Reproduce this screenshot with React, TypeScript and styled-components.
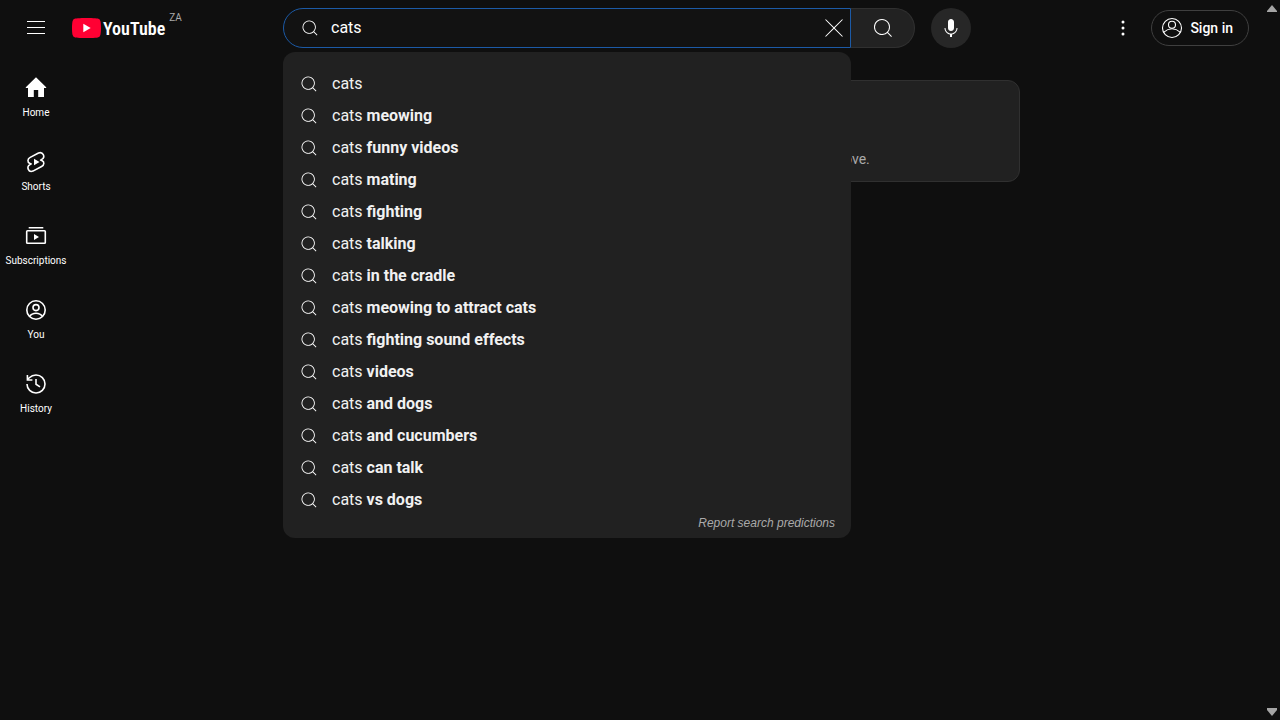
import React, { useState } from 'react';
import styled, { createGlobalStyle } from 'styled-components';

const GlobalStyle = createGlobalStyle`
  *, *::before, *::after { box-sizing: border-box; }
  body {
    margin: 0;
    background: #0f0f0f;
    color: #f1f1f1;
    font-family: Roboto, Arial, sans-serif;
    font-size: 14px;
  }
  button { font-family: inherit; color: inherit; border: 0; background: none; padding: 0; cursor: pointer; }
  a { color: inherit; text-decoration: none; }
  svg { display: block; flex: none; }
`;

const Shell = styled.div`
  display: flex;
  min-height: 100vh;
`;

const Page = styled.div`
  flex: 1;
  min-width: 0;
`;

const ScrollTrack = styled.div`
  position: sticky;
  top: 0;
  width: 15px;
  height: 100vh;
  padding: 5px 1px 4px 0;
  display: flex;
  flex-direction: column;
  align-items: center;
  justify-content: space-between;
`;

const Masthead = styled.header`
  display: flex;
  align-items: center;
  justify-content: space-between;
  height: 56px;
  padding: 0 16px;
`;

const Start = styled.div`
  display: flex;
  align-items: center;
  width: 174px;
`;

const Center = styled.div`
  display: flex;
  align-items: center;
  flex: 0 1 728px;
  min-width: 0;
`;

const End = styled.div`
  display: flex;
  align-items: center;
  justify-content: flex-end;
  gap: 8px;
  width: 225px;
`;

const IconButton = styled.button<{ $filled?: boolean }>`
  display: flex;
  align-items: center;
  justify-content: center;
  flex: none;
  width: 40px;
  height: 40px;
  border-radius: 50%;
  background: ${(p) => (p.$filled ? '#272727' : 'transparent')};
`;

const Logo = styled.a`
  display: flex;
  align-items: center;
  height: 56px;
  padding-left: 16px;
  gap: 2px;
`;

const Wordmark = styled.span`
  padding-top: 2px;
  font-family: 'Roboto Condensed', 'Liberation Sans Narrow', 'Liberation Sans', sans-serif;
  font-size: 18px;
  line-height: 22px;
  font-weight: 600;
  color: #fff;
`;

const Country = styled.span`
  align-self: flex-start;
  padding: 12px 0 0 2px;
  font-size: 10px;
  line-height: 12px;
  color: #aaa;
`;

const SearchForm = styled.form`
  display: flex;
  flex: 1;
  min-width: 0;
  margin: 0 16px 0 40px;
`;

const SearchBox = styled.div`
  position: relative;
  display: flex;
  align-items: center;
  flex: 1;
  min-width: 0;
  height: 40px;
  padding: 0 4px 0 16px;
  border: 1px solid #1c5aa6;
  border-radius: 40px 0 0 40px;
  background: #121212;
`;

const SearchInput = styled.input`
  flex: 1;
  min-width: 0;
  margin-left: 11px;
  padding: 0;
  border: 0;
  outline: 0;
  background: transparent;
  color: #fff;
  font-family: inherit;
  font-size: 16px;
  line-height: 24px;
`;

const SearchButton = styled.button`
  display: flex;
  align-items: center;
  justify-content: center;
  width: 64px;
  height: 40px;
  border: 1px solid #303030;
  border-left: 0;
  border-radius: 0 40px 40px 0;
  background: #222;
`;

const Suggestions = styled.div`
  position: absolute;
  z-index: 2;
  top: 43px;
  left: -1px;
  right: -1px;
  padding: 16px 0 8px;
  border-radius: 12px;
  background: #212121;
`;

const SuggestionList = styled.ul`
  list-style: none;
  margin: 0;
  padding: 0;
`;

const Suggestion = styled.button`
  display: flex;
  align-items: center;
  gap: 13px;
  width: 100%;
  height: 32px;
  padding: 0 16px;
  font-size: 16px;
  line-height: 24px;
  text-align: left;
  white-space: pre;
  b { font-weight: 700; }
`;

const Report = styled.a`
  display: block;
  padding: 0 16px;
  text-align: right;
  font: italic 12px/14px 'Liberation Sans', Arial, sans-serif;
  color: #aaa;
`;

const SignIn = styled.a`
  display: flex;
  align-items: center;
  gap: 6px;
  height: 36px;
  padding: 0 15px 0 8px;
  border: 1px solid #3f3f3f;
  border-radius: 18px;
  font-size: 14px;
  font-weight: 500;
  white-space: nowrap;
  color: #fff;
`;

const Body = styled.div`
  display: flex;
`;

const Guide = styled.nav`
  flex: none;
  width: 72px;
  padding-top: 4px;
`;

const GuideItem = styled.a`
  display: flex;
  flex-direction: column;
  align-items: center;
  gap: 6px;
  padding: 16px 0 14px;
  font-size: 10px;
  line-height: 14px;
  color: #fff;
`;

const Main = styled.main`
  flex: 1;
  min-width: 0;
  padding-top: 24px;
`;

const Nudge = styled.section`
  max-width: 703px;
  margin: 0 auto;
  padding: 24px 12px 12px;
  border: 1px solid #303030;
  border-radius: 12px;
  background: #212121;
  text-align: center;
`;

const NudgeTitle = styled.h1`
  margin: 0 0 12px;
  font-size: 24px;
  line-height: 32px;
`;

const NudgeText = styled.p`
  margin: 0;
  font-size: 14px;
  line-height: 20px;
  color: #aaa;
`;

const Icon = ({ size = 24, children }: { size?: number; children: React.ReactNode }) => (
  <svg width={size} height={size} viewBox="0 0 24 24" fill="#fff" aria-hidden="true">
    {children}
  </svg>
);

const SearchIcon = ({ size }: { size?: number }) => (
  <Icon size={size}>
    <path
      fillRule="evenodd"
      d="M16.296 16.996a8 8 0 11.707-.708l3.909 3.91-.707.707-3.909-3.909zM18 11a7 7 0 00-14 0 7 7 0 1014 0z"
    />
  </Icon>
);

const line = { fill: 'none', stroke: '#fff', strokeWidth: 1.6 } as const;

const guide = [
  {
    label: 'Home',
    icon: <path d="M12 1.3 1.8 11.2V12H4v9h5.8v-7h4.4v7H20v-9h2.2v-.8z" />,
  },
  {
    label: 'Shorts',
    icon: (
      <>
        <path
          {...line}
          strokeLinejoin="round"
          d="m14.500 3-8.300 4.400C3.300 9 3.300 12 5.600 13.200l1.600.7-1.200.7c-4 2.200-1.500 8.200 2.900 6.500l8.700-4.600c2.900-1.600 2.800-4.700.6-5.700l-1.600-.7 1.200-.7c4-2.300 1.100-8.300-3.300-6.400z"
        />
        <path d="M10 8.800v6.400l5.500-3.200z" />
      </>
    ),
  },
  {
    label: 'Subscriptions',
    icon: (
      <>
        <path d="M4.700 3h14.600v1.400H4.700zM10 10v6l5-3z" />
        <rect x="2.700" y="6.700" width="18.600" height="12.600" rx="0.8" {...line} />
      </>
    ),
  },
  {
    label: 'You',
    icon: (
      <g {...line}>
        <circle cx="12" cy="12" r="9.200" />
        <circle cx="12" cy="9.600" r="3" />
        <path d="M5.400 18.600C7 16.200 9.300 15.200 12 15.200s5 1 6.600 3.400" />
      </g>
    ),
  },
  {
    label: 'History',
    icon: (
      <g {...line}>
        <path d="M3 12a9 9 0 1 0 9-9 9.750 9.750 0 0 0-6.740 2.740L3.500 7.500" />
        <path d="M3.400 3v5h5M12 7v5.200l4 2.600" />
      </g>
    ),
  },
];

const suggestions = [
  '',
  'meowing',
  'funny videos',
  'mating',
  'fighting',
  'talking',
  'in the cradle',
  'meowing to attract cats',
  'fighting sound effects',
  'videos',
  'and dogs',
  'and cucumbers',
  'can talk',
  'vs dogs',
];

export default function App() {
  const [query, setQuery] = useState('cats');

  return (
    <Shell>
      <GlobalStyle />
      <Page>
        <Masthead>
          <Start>
            <IconButton aria-label="Guide">
              <Icon>
                <path d="M21 6H3V5h18v1zm0 5H3v1h18v-1zm0 6H3v1h18v-1z" />
              </Icon>
            </IconButton>
            <Logo href="#home">
              <svg width="29" height="20" viewBox="0 0 29 20" aria-hidden="true">
                <path
                  fill="#f03"
                  d="M28.400 3.100A3.600 3.600 0 0 0 25.800.6C23.500 0 14.500 0 14.500 0S5.500 0 3.200.6A3.600 3.600 0 0 0 .6 3.100C0 5.400 0 10 0 10s0 4.600.6 6.900a3.600 3.600 0 0 0 2.600 2.500c2.300.6 11.300.6 11.300.6s9 0 11.300-.6a3.600 3.600 0 0 0 2.600-2.500C29 14.600 29 10 29 10s0-4.600-.6-6.900z"
                />
                <path fill="#fff" d="M11.300 14.300V5.700L18.700 10z" />
              </svg>
              <Wordmark>YouTube</Wordmark>
              <Country>ZA</Country>
            </Logo>
          </Start>

          <Center>
            <SearchForm role="search" onSubmit={(e) => e.preventDefault()}>
              <SearchBox>
                <SearchIcon size={20} />
                <SearchInput
                  aria-label="Search"
                  value={query}
                  onChange={(e) => setQuery(e.target.value)}
                />
                <button type="button" aria-label="Clear search query" onClick={() => setQuery('')}>
                  <Icon>
                    <path d="m12.710 12 8.150 8.150-.71.71L12 12.710l-8.150 8.150-.71-.71L11.290 12 3.150 3.850l.71-.71L12 11.290l8.150-8.150.71.71L12.710 12z" />
                  </Icon>
                </button>
                <Suggestions>
                  <SuggestionList>
                    {suggestions.map((s) => (
                      <li key={s}>
                        <Suggestion type="button" onClick={() => setQuery(`cats ${s}`.trim())}>
                          <SearchIcon size={20} />
                          <span>
                            cats{s && ' '}
                            {s && <b>{s}</b>}
                          </span>
                        </Suggestion>
                      </li>
                    ))}
                  </SuggestionList>
                  <Report href="#report">Report search predictions</Report>
                </Suggestions>
              </SearchBox>
              <SearchButton type="submit" aria-label="Search">
                <SearchIcon />
              </SearchButton>
            </SearchForm>
            <IconButton $filled aria-label="Search with your voice">
              <Icon>
                <path d="M12 3c-1.660 0-3 1.370-3 3.070v5.860c0 1.700 1.340 3.070 3 3.070s3-1.370 3-3.070V6.070C15 4.370 13.660 3 12 3zm6.500 9h-1c0 3.030-2.470 5.500-5.500 5.500S6.500 15.030 6.500 12h-1c0 3.240 2.390 5.930 5.500 6.410V21h2v-2.590c3.110-.48 5.500-3.170 5.500-6.410z" />
              </Icon>
            </IconButton>
          </Center>

          <End>
            <IconButton aria-label="Settings">
              <Icon>
                <circle cx="12" cy="6" r="1.5" />
                <circle cx="12" cy="12" r="1.5" />
                <circle cx="12" cy="18" r="1.5" />
              </Icon>
            </IconButton>
            <SignIn href="#signin">
              <Icon>
                <g fill="none" stroke="#fff" strokeWidth="1.1">
                  <circle cx="12" cy="12" r="9.500" />
                  <circle cx="12" cy="8.800" r="3.500" />
                  <path d="M3.500 16.300Q12 9.200 20.500 16.300" />
                </g>
              </Icon>
              Sign in
            </SignIn>
          </End>
        </Masthead>

        <Body>
          <Guide>
            {guide.map((g) => (
              <GuideItem key={g.label} href={`#${g.label.toLowerCase()}`}>
                <Icon>{g.icon}</Icon>
                {g.label}
              </GuideItem>
            ))}
          </Guide>
          <Main>
            <Nudge>
              <NudgeTitle>Try searching to get started</NudgeTitle>
              <NudgeText>Start watching videos to help us build a feed of videos you'll love.</NudgeText>
            </Nudge>
          </Main>
        </Body>
      </Page>
      <ScrollTrack aria-hidden="true">
        <svg width="10" height="8" viewBox="0 0 10 8" fill="#a5a5a5">
          <path d="M5 0 10 6v1H0V6z" />
        </svg>
        <svg width="10" height="8" viewBox="0 0 10 8" fill="#a5a5a5">
          <path d="M5 8 10 2V0H0v2z" />
        </svg>
      </ScrollTrack>
    </Shell>
  );
}
